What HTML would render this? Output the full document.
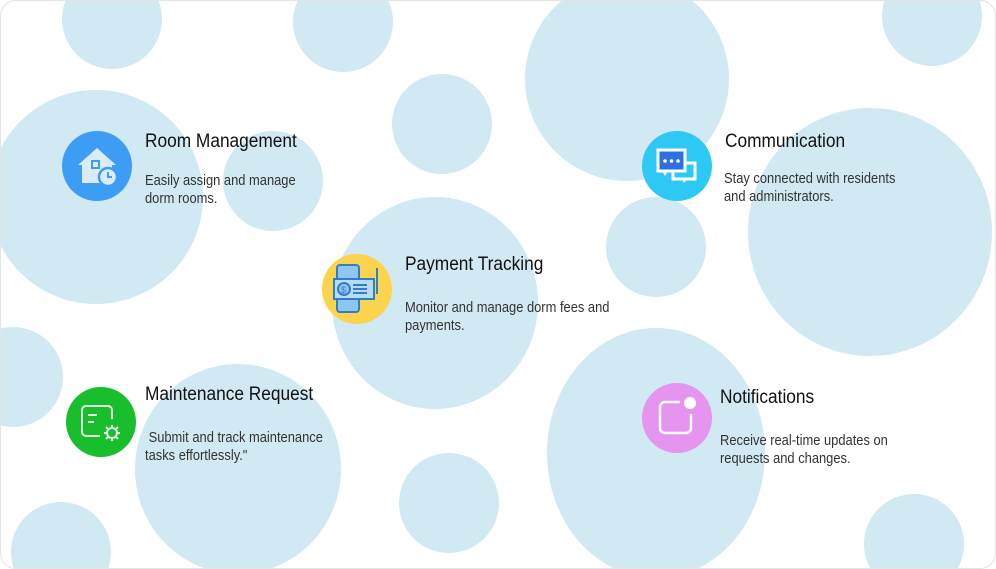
<!DOCTYPE html>
<html><head><style>
html,body{margin:0;padding:0;width:996px;height:569px;overflow:hidden;background:#fff;}
.wrap{position:relative;box-sizing:border-box;width:996px;height:569px;border:1px solid #e4e4e4;border-radius:16px;overflow:hidden;background:#fff;}
.c{position:absolute;border-radius:50%;background:#d1e9f2;}
.ic{position:absolute;width:70px;height:70px;border-radius:50%;}
.t{position:absolute;font-family:"Liberation Sans",sans-serif;color:#111;font-size:19px;white-space:nowrap;transform:scaleX(0.91);transform-origin:0 0;}
.d{position:absolute;font-family:"Liberation Sans",sans-serif;color:#333;font-size:14.5px;line-height:18px;white-space:nowrap;transform:scaleX(0.89);transform-origin:0 0;}
</style></head><body><div class="wrap">
<div class="c" style="left:61px;top:-32px;width:100px;height:100px"></div>
<div class="c" style="left:292px;top:-29px;width:100px;height:100px"></div>
<div class="c" style="left:524px;top:-24px;width:204px;height:204px"></div>
<div class="c" style="left:881px;top:-35px;width:100px;height:100px"></div>
<div class="c" style="left:391px;top:73px;width:100px;height:100px"></div>
<div class="c" style="left:-12px;top:89px;width:214px;height:214px"></div>
<div class="c" style="left:222px;top:130px;width:100px;height:100px"></div>
<div class="c" style="left:331px;top:196px;width:206px;height:212px"></div>
<div class="c" style="left:605px;top:196px;width:100px;height:100px"></div>
<div class="c" style="left:747px;top:107px;width:244px;height:248px"></div>
<div class="c" style="left:-38px;top:326px;width:100px;height:100px"></div>
<div class="c" style="left:134px;top:363px;width:206px;height:210px"></div>
<div class="c" style="left:546px;top:327px;width:218px;height:250px"></div>
<div class="c" style="left:398px;top:452px;width:100px;height:100px"></div>
<div class="c" style="left:10px;top:501px;width:100px;height:100px"></div>
<div class="c" style="left:863px;top:493px;width:100px;height:100px"></div>

<div class="ic" style="left:61px;top:130px;background:#3d9df5">
<svg width="70" height="70" viewBox="0 0 70 70"><path d="M16 34 L35 17 L54 34 L50 34 L50 52 L20 52 L20 34 Z" fill="#dcebf8"/><rect x="30" y="30" width="7" height="7" fill="none" stroke="#3d9df5" stroke-width="2"/><circle cx="46" cy="46" r="9" fill="#dcebf8" stroke="#3d9df5" stroke-width="2.5"/><path d="M46 41 V46 H50" stroke="#3d9df5" stroke-width="2" fill="none"/></svg></div>
<div class="t" style="left:144px;top:130px">Room Management</div>
<div class="d" style="left:144px;top:171px">Easily assign and manage<br>dorm rooms.</div>

<div class="ic" style="left:321px;top:253px;background:#fcd34c">
<svg width="70" height="70" viewBox="0 0 70 70" fill="none" stroke="#2f7fc8" stroke-width="2"><rect x="15" y="11" width="22" height="47" rx="3" fill="#8fc6f0"/><rect x="12" y="25" width="40" height="20" fill="#b8dcf5"/><circle cx="22" cy="35" r="6" fill="#8fc6f0"/><text x="19" y="39" font-size="9" fill="#2f7fc8" stroke="none" font-family="Liberation Sans">$</text><path d="M31 31h14M31 35h14M31 39h14"/><path d="M55 14 L55 40"/></svg></div>
<div class="t" style="left:404px;top:253px">Payment Tracking</div>
<div class="d" style="left:404px;top:298px">Monitor and manage dorm fees and<br>payments.</div>

<div class="ic" style="left:641px;top:130px;background:#2ec8f5">
<svg width="70" height="70" viewBox="0 0 70 70"><rect x="31" y="32" width="22" height="16" fill="#2ec8f5" stroke="#fff" stroke-width="3"/><path d="M40 48 l2 4 l3-4" fill="#fff"/><rect x="16" y="19" width="27" height="21" fill="#2f6fe0" stroke="#fff" stroke-width="3"/><path d="M20 40 l3 5 l3-5" fill="#fff"/><circle cx="23" cy="30" r="1.8" fill="#fff"/><circle cx="29.5" cy="30" r="1.8" fill="#fff"/><circle cx="36" cy="30" r="1.8" fill="#fff"/></svg></div>
<div class="t" style="left:724px;top:130px">Communication</div>
<div class="d" style="left:723px;top:169px">Stay connected with residents<br>and administrators.</div>

<div class="ic" style="left:65px;top:386px;background:#18be2c">
<svg width="70" height="70" viewBox="0 0 70 70" fill="none" stroke="#e6f7e6" stroke-width="2"><path d="M34 49 H20 a4 4 0 0 1-4-4 V23 a4 4 0 0 1 4-4 H42 a4 4 0 0 1 4 4 V32"/><path d="M22 28h9M22 35h6"/><circle cx="46" cy="46" r="5"/><path d="M46 38v3M46 51v3M38 46h3M51 46h3M40 40l2 2M50 50l2 2M40 52l2-2M50 42l2-2"/></svg></div>
<div class="t" style="left:144px;top:383px">Maintenance Request</div>
<div class="d" style="left:144px;top:428px">&nbsp;Submit and track maintenance<br>tasks effortlessly."</div>

<div class="ic" style="left:641px;top:382px;background:#e594ef">
<svg width="70" height="70" viewBox="0 0 70 70" fill="none" stroke="#fff" stroke-width="2.5"><path d="M38 19 H23 a5 5 0 0 0-5 5 V45 a5 5 0 0 0 5 5 H44 a5 5 0 0 0 5-5 V31"/><circle cx="48" cy="20" r="6" fill="#fff" stroke="none"/></svg></div>
<div class="t" style="left:719px;top:386px">Notifications</div>
<div class="d" style="left:719px;top:431px">Receive real-time updates on<br>requests and changes.</div>
</div></body></html>
